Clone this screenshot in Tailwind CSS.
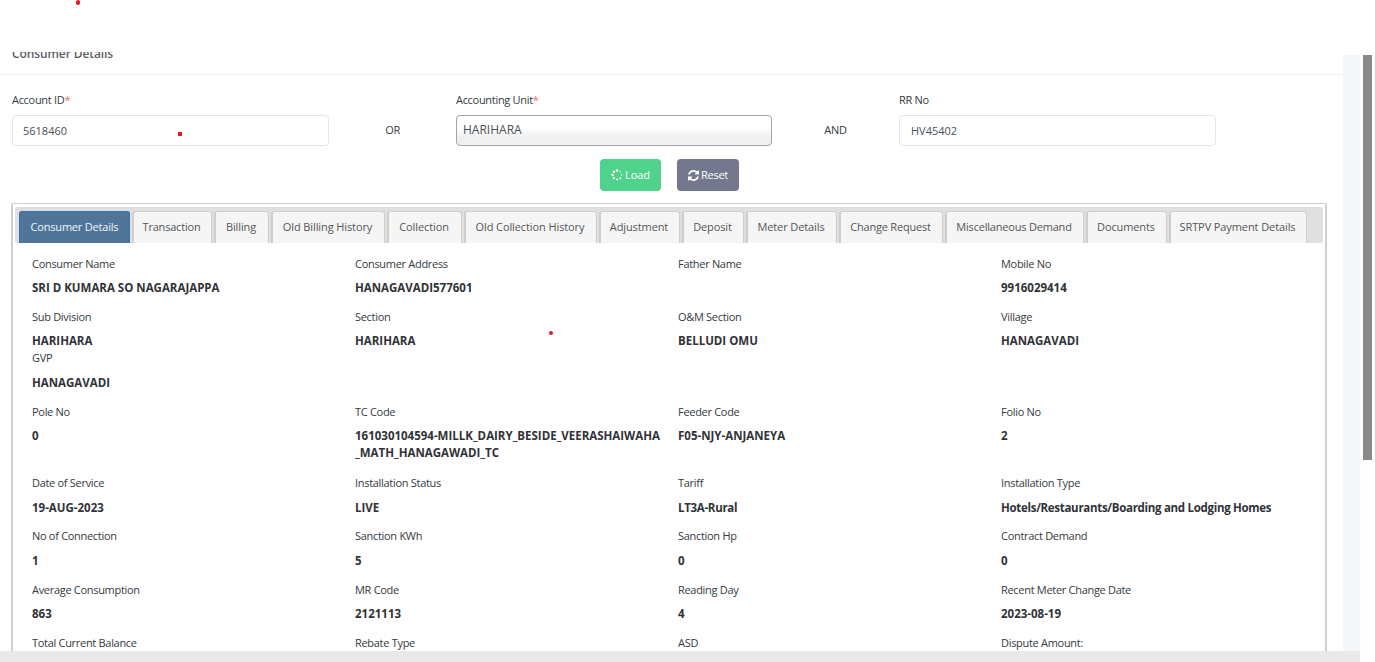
<!DOCTYPE html>
<html>
<head>
<title>Consumer Details</title>
<script src="https://cdn.jsdelivr.net/npm/@tailwindcss/browser@4"></script>
</head>
<body class="bg-white">
<div class="relative w-[1375px] h-[662px] overflow-hidden bg-white font-['Open_Sans',sans-serif] text-[11px] tracking-[-0.3px] text-[#343a40]">

  <!-- stray red marks in the page -->
  <span class="absolute left-[76px] top-0 w-[4px] h-[5px] rounded-full bg-[#e01b24]"></span>
  <span class="absolute left-[178px] top-[132px] w-[4px] h-[4px] bg-[#e01b24] z-10"></span>
  <span class="absolute left-[549px] top-[331px] w-[4px] h-[4px] rounded-full bg-[#e01b24] z-10"></span>

  <div class="h-[52px] bg-white"></div>

  <div class="flex h-[599px]">
    <main class="w-[1343px] h-[599px] overflow-hidden bg-white">
      <div class="h-[23px] border-b border-[#eff0f2] overflow-hidden">
        <h4 class="pl-[12px] -mt-[7px] text-[12px] leading-[18px] font-semibold tracking-[-0.1px] text-[#5c6066]">Consumer Details</h4>
      </div>

      <div class="flex items-start pl-[12px] pt-[16px]">
        <div class="w-[317px]">
          <label class="block leading-[18px] mb-[6px]">Account ID<span class="text-[#f46a6a]">*</span></label>
          <div class="h-[31px] border border-[#e4e6e9] rounded-[4px] px-[10px] leading-[29px] tracking-normal text-[#495057]">5618460</div>
        </div>
        <div class="w-[127px] pt-[30px] text-center leading-[18px]">OR</div>
        <div class="w-[316px]">
          <label class="block leading-[18px] mb-[6px]">Accounting Unit<span class="text-[#f46a6a]">*</span></label>
          <div class="h-[31px] border border-[#a3a3a3] rounded-[4px] px-[6px] text-[12px] leading-[27px] tracking-normal text-[#495057] bg-[linear-gradient(#ffffff_40%,#efefef_75%,#f0f0f0)]">HARIHARA</div>
        </div>
        <div class="w-[127px] pt-[30px] text-center leading-[18px]">AND</div>
        <div class="w-[317px]">
          <label class="block leading-[18px] mb-[6px]">RR No</label>
          <div class="h-[31px] border border-[#e4e6e9] rounded-[4px] px-[11px] leading-[29px] tracking-normal text-[#495057]">HV45402</div>
        </div>
      </div>

      <div class="flex pl-[600px] gap-[16px] mt-[13px] text-white">
        <button class="flex items-center justify-center gap-[2px] w-[61px] h-[32px] rounded-[4px] tracking-normal bg-[#51d28c]">
          <svg class="w-[12px] h-[12px]" viewBox="0 0 24 24" fill="#fff">
            <circle cx="12" cy="3" r="2.6"/><circle cx="18.4" cy="5.6" r="1.4"/><circle cx="21" cy="12" r="1.6"/><circle cx="18.4" cy="18.4" r="1.9"/><circle cx="12" cy="21" r="2.1"/><circle cx="5.6" cy="18.4" r="2.3"/><circle cx="3" cy="12" r="2.5"/><circle cx="5.6" cy="5.6" r="2.6"/>
          </svg>
          Load
        </button>
        <button class="flex items-center justify-center gap-[2px] w-[62px] h-[32px] rounded-[4px] bg-[#74788d]">
          <svg class="w-[11px] h-[11px]" viewBox="0 0 1536 1536" fill="#fff">
            <path d="M1511 928q0 5-1 7-64 268-268 434.5t-478 166.5q-146 0-282.5-55t-243.5-157l-129 129q-19 19-45 19t-45-19-19-45v-448q0-26 19-45t45-19h448q26 0 45 19t19 45-19 45l-137 137q71 66 161 102t187 36q134 0 250-65t186-179q11-17 53-117 8-23 30-23h192q13 0 22.5 9.5t9.5 22.5zm25-800v448q0 26-19 45t-45 19h-448q-26 0-45-19t-19-45 19-45l138-138q-148-137-349-137-134 0-250 65t-186 179q-11 17-53 117-8 23-30 23h-199q-13 0-22.5-9.5t-9.5-22.5v-7q65-268 270-434.5t480-166.5q146 0 284 55.5t245 156.5l130-129q19-19 45-19t45 19 19 45z"/>
          </svg>
          Reset
        </button>
      </div>

      <div class="ml-[11px] mt-[12px] w-[1316px] h-[500px] border-2 border-b-0 border-[#cfcfcf] border-t rounded-t-[2px]">
        <div class="mx-[2px] mt-[3px] h-[36px] pt-[4px] pl-[4px] flex gap-[2px] bg-[#e2e0df] rounded-[2px] tracking-[-0.1px] text-[#555]">
          <a class="w-[111px] h-[32px] leading-[30px] text-center tracking-[-0.2px] text-[#f4f6f8] bg-[#507599] border border-b-0 border-[#2e6fbd] rounded-t-[3px]">Consumer Details</a>
          <a class="w-[80px] h-[32px] pr-[2px] leading-[30px] text-center tracking-[-0.2px] bg-[#f5f5f5] border-2 border-[#d0cdcc] border-t border-r border-b-0 rounded-t-[3px]">Transaction</a>
          <a class="w-[55px] h-[32px] pr-[2px] leading-[30px] text-center bg-[#f5f5f5] border-2 border-[#d0cdcc] border-t border-r border-b-0 rounded-t-[3px]">Billing</a>
          <a class="w-[114px] h-[32px] pr-[2px] leading-[30px] text-center bg-[#f5f5f5] border-2 border-[#d0cdcc] border-t border-r border-b-0 rounded-t-[3px]">Old Billing History</a>
          <a class="w-[75px] h-[32px] pr-[2px] leading-[30px] text-center bg-[#f5f5f5] border-2 border-[#d0cdcc] border-t border-r border-b-0 rounded-t-[3px]">Collection</a>
          <a class="w-[133px] h-[32px] pr-[2px] leading-[30px] text-center bg-[#f5f5f5] border-2 border-[#d0cdcc] border-t border-r border-b-0 rounded-t-[3px]">Old Collection History</a>
          <a class="w-[81px] h-[32px] pr-[2px] leading-[30px] text-center bg-[#f5f5f5] border-2 border-[#d0cdcc] border-t border-r border-b-0 rounded-t-[3px]">Adjustment</a>
          <a class="w-[62px] h-[32px] pr-[2px] leading-[30px] text-center bg-[#f5f5f5] border-2 border-[#d0cdcc] border-t border-r border-b-0 rounded-t-[3px]">Deposit</a>
          <a class="w-[91px] h-[32px] pr-[2px] leading-[30px] text-center bg-[#f5f5f5] border-2 border-[#d0cdcc] border-t border-r border-b-0 rounded-t-[3px]">Meter Details</a>
          <a class="w-[104px] h-[32px] pr-[2px] leading-[30px] text-center tracking-[-0.2px] bg-[#f5f5f5] border-2 border-[#d0cdcc] border-t border-r border-b-0 rounded-t-[3px]">Change Request</a>
          <a class="w-[139px] h-[32px] pr-[2px] leading-[30px] text-center tracking-[-0.2px] bg-[#f5f5f5] border-2 border-[#d0cdcc] border-t border-r border-b-0 rounded-t-[3px]">Miscellaneous Demand</a>
          <a class="w-[81px] h-[32px] pr-[2px] leading-[30px] text-center bg-[#f5f5f5] border-2 border-[#d0cdcc] border-t border-r border-b-0 rounded-t-[3px]">Documents</a>
          <a class="w-[138px] h-[32px] pr-[2px] leading-[30px] text-center bg-[#f5f5f5] border-2 border-[#d0cdcc] border-t border-r border-b-0 rounded-t-[3px]">SRTPV Payment Details</a>
        </div>

        <div class="pl-[19px] pt-[12px]">
          <div class="grid grid-cols-[323px_323px_323px_323px]">
            <div class="pb-[12px]"><p class="leading-[18px] mb-[6px]">Consumer Name</p><p class="leading-[17px] text-[11.5px] tracking-normal font-bold text-[#2f3338]">SRI D KUMARA SO NAGARAJAPPA</p></div>
            <div class="pb-[12px]"><p class="leading-[18px] mb-[6px]">Consumer Address</p><p class="leading-[17px] text-[11.5px] tracking-normal font-bold text-[#2f3338]">HANAGAVADI577601</p></div>
            <div class="pb-[12px]"><p class="leading-[18px] mb-[6px]">Father Name</p></div>
            <div class="pb-[12px]"><p class="leading-[18px] mb-[6px]">Mobile No</p><p class="leading-[17px] text-[11.5px] tracking-normal font-bold text-[#2f3338]">9916029414</p></div>

            <div><p class="leading-[18px] mb-[6px]">Sub Division</p><p class="leading-[17px] text-[11.5px] tracking-normal font-bold text-[#2f3338]">HARIHARA</p></div>
            <div><p class="leading-[18px] mb-[6px]">Section</p><p class="leading-[17px] text-[11.5px] tracking-normal font-bold text-[#2f3338]">HARIHARA</p></div>
            <div><p class="leading-[18px] mb-[6px]">O&amp;M Section</p><p class="leading-[17px] text-[11.5px] tracking-normal font-bold text-[#2f3338]">BELLUDI OMU</p></div>
            <div><p class="leading-[18px] mb-[6px]">Village</p><p class="leading-[17px] text-[11.5px] tracking-normal font-bold text-[#2f3338]">HANAGAVADI</p></div>

            <div class="col-span-4 pb-[12px]"><p class="leading-[18px] mb-[7px]">GVP</p><p class="leading-[17px] text-[11.5px] tracking-normal font-bold text-[#2f3338]">HANAGAVADI</p></div>

            <div class="pb-[13px]"><p class="leading-[18px] mb-[6px]">Pole No</p><p class="leading-[17px] text-[11.5px] tracking-normal font-bold text-[#2f3338]">0</p></div>
            <div class="pb-[13px]"><p class="leading-[18px] mb-[6px]">TC Code</p><p class="leading-[17px] text-[11.5px] tracking-normal font-bold text-[#2f3338]">161030104594-MILLK_DAIRY_BESIDE_VEERASHAIWAHA<br>_MATH_HANAGAWADI_TC</p></div>
            <div class="pb-[13px]"><p class="leading-[18px] mb-[6px]">Feeder Code</p><p class="leading-[17px] text-[11.5px] tracking-normal font-bold text-[#2f3338]">F05-NJY-ANJANEYA</p></div>
            <div class="pb-[13px]"><p class="leading-[18px] mb-[6px]">Folio No</p><p class="leading-[17px] text-[11.5px] tracking-normal font-bold text-[#2f3338]">2</p></div>

            <div class="pb-[11px]"><p class="leading-[18px] mb-[7px]">Date of Service</p><p class="leading-[17px] text-[11.5px] tracking-normal font-bold text-[#2f3338]">19-AUG-2023</p></div>
            <div class="pb-[11px]"><p class="leading-[18px] mb-[7px]">Installation Status</p><p class="leading-[17px] text-[11.5px] tracking-normal font-bold text-[#2f3338]">LIVE</p></div>
            <div class="pb-[11px]"><p class="leading-[18px] mb-[7px]">Tariff</p><p class="leading-[17px] text-[11.5px] tracking-[-0.3px] font-bold text-[#2f3338]">LT3A-Rural</p></div>
            <div class="pb-[11px]"><p class="leading-[18px] mb-[7px]">Installation Type</p><p class="leading-[17px] text-[11.5px] tracking-[-0.3px] font-bold text-[#2f3338]">Hotels/Restaurants/Boarding and Lodging Homes</p></div>

            <div class="pb-[12px]"><p class="leading-[18px] mb-[7px]">No of Connection</p><p class="leading-[17px] text-[11.5px] tracking-normal font-bold text-[#2f3338]">1</p></div>
            <div class="pb-[12px]"><p class="leading-[18px] mb-[7px]">Sanction KWh</p><p class="leading-[17px] text-[11.5px] tracking-normal font-bold text-[#2f3338]">5</p></div>
            <div class="pb-[12px]"><p class="leading-[18px] mb-[7px]">Sanction Hp</p><p class="leading-[17px] text-[11.5px] tracking-normal font-bold text-[#2f3338]">0</p></div>
            <div class="pb-[12px]"><p class="leading-[18px] mb-[7px]">Contract Demand</p><p class="leading-[17px] text-[11.5px] tracking-normal font-bold text-[#2f3338]">0</p></div>

            <div class="pb-[12px]"><p class="leading-[18px] mb-[6px]">Average Consumption</p><p class="leading-[17px] text-[11.5px] tracking-normal font-bold text-[#2f3338]">863</p></div>
            <div class="pb-[12px]"><p class="leading-[18px] mb-[6px]">MR Code</p><p class="leading-[17px] text-[11.5px] tracking-normal font-bold text-[#2f3338]">2121113</p></div>
            <div class="pb-[12px]"><p class="leading-[18px] mb-[6px]">Reading Day</p><p class="leading-[17px] text-[11.5px] tracking-normal font-bold text-[#2f3338]">4</p></div>
            <div class="pb-[12px]"><p class="leading-[18px] mb-[6px]">Recent Meter Change Date</p><p class="leading-[17px] text-[11.5px] tracking-normal font-bold text-[#2f3338]">2023-08-19</p></div>

            <div><p class="leading-[18px]">Total Current Balance</p></div>
            <div><p class="leading-[18px]">Rebate Type</p></div>
            <div><p class="leading-[18px]">ASD</p></div>
            <div><p class="leading-[18px]">Dispute Amount:</p></div>
          </div>
        </div>
      </div>
    </main>

    <div class="w-[17px] mt-[3px] bg-[#f5f6f8]"></div>
    <div class="flex-1 mt-[3px] bg-[#fdfdfd] pl-[3px]">
      <div class="w-[9px] h-[405px] bg-[#8a8a8a]"></div>
    </div>
  </div>

  <div class="flex h-[11px]">
    <div class="w-[1360px] bg-[#e9e9e9]"></div>
    <div class="flex-1 bg-[#fdfdfd]"></div>
  </div>
</div>
</body>
</html>
